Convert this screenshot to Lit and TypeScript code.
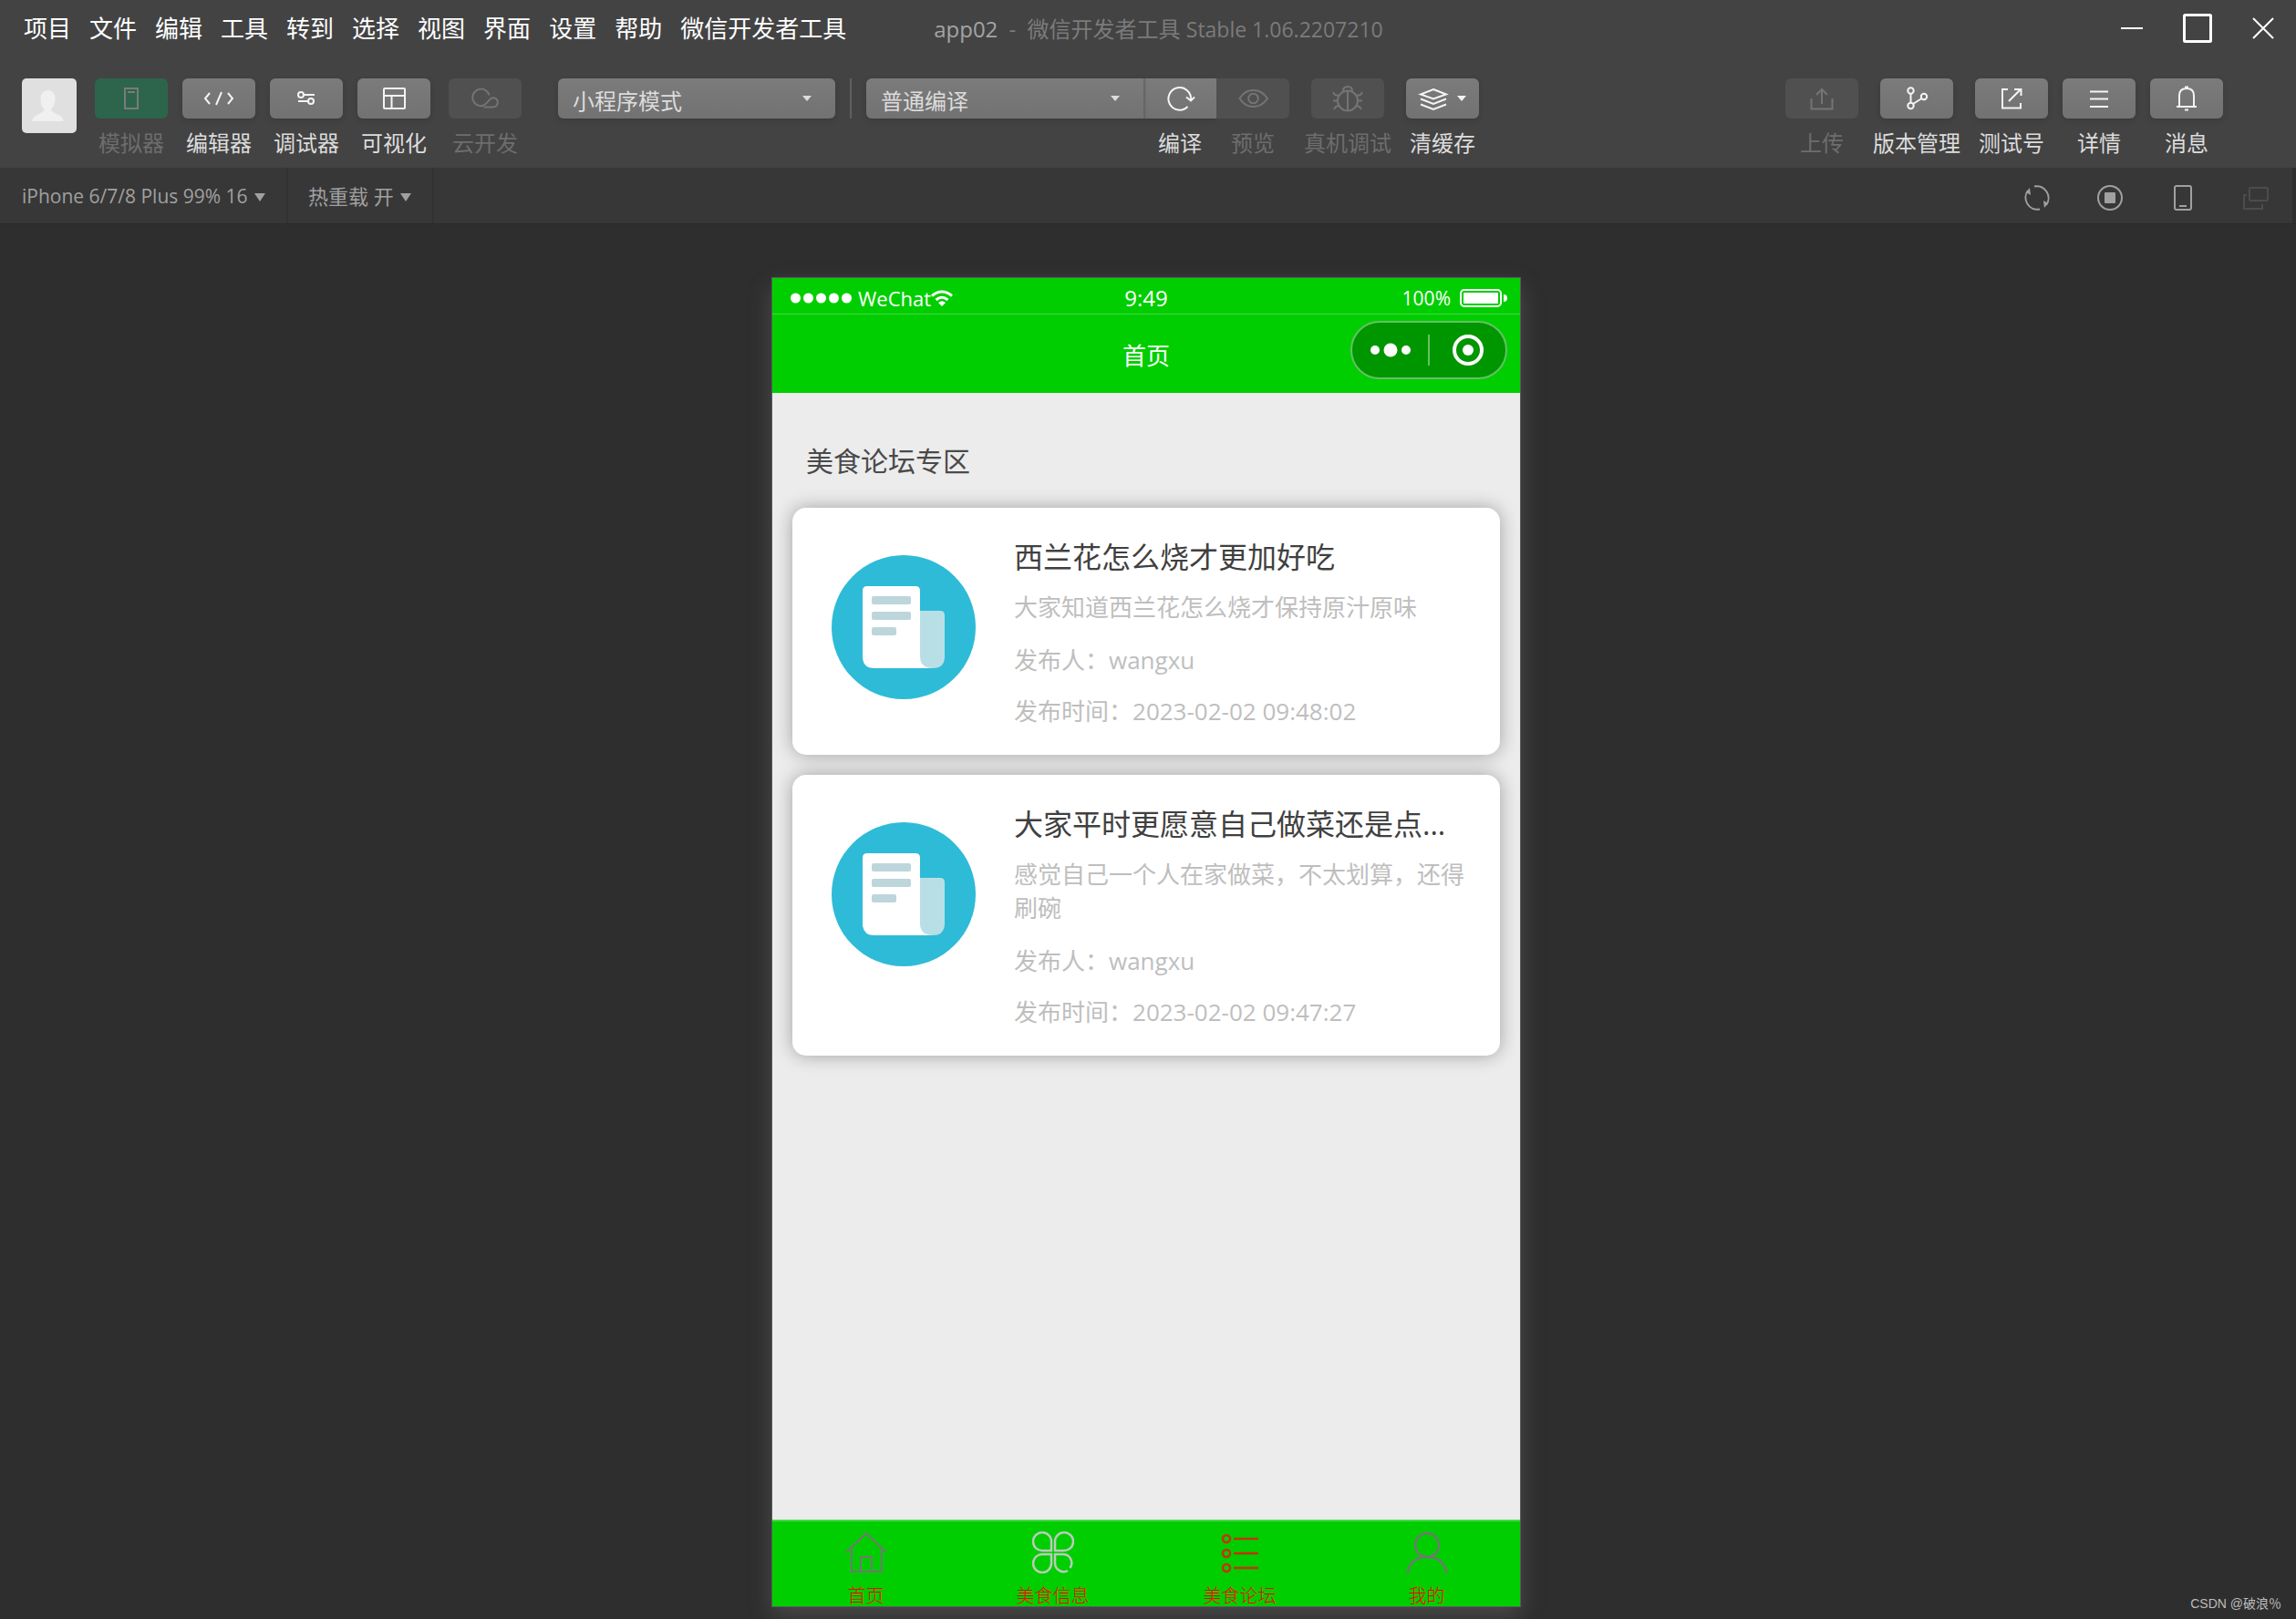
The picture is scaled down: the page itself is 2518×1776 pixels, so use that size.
import { LitElement, html, css, svg, nothing, type TemplateResult } from "lit";
import { customElement } from "lit/decorators.js";
import { classMap } from "lit/directives/class-map.js";

/* Toolbar icons share one 80x44 canvas, the size of a toolbar button. */
const icons = {
  simulator: svg`<path d="M33 11h14v22H33zM36 15h8"/>`,
  code: svg`<path d="M30 16l-5 6 5 6M43 15l-6 14M50 16l5 6-5 6"/>`,
  debug: svg`<circle cx="34" cy="18" r="3"/><path d="M37 18h12M31 25h11"/><circle cx="45" cy="25" r="3"/>`,
  layout: svg`<rect x="29" y="11" width="23" height="22" rx="1"/><path d="M29 19h23M37.500 19v14"/>`,
  cloud: svg`<path d="M44.500 18.500A9.300 9.300 0 1 0 35 30.200c4 0 6-2.500 8.500-5.200 2-2.500 4-4 6.500-3.600 5.500 1.200 5 10-1.500 10h-10"/>`,
  compile: svg`<path d="M46.500 31A12.300 12.300 0 1 1 50 23.500M45 20.500l5 4 4-4"/>`,
  preview: svg`<path d="M25.500 22Q31 13 40.500 13T56 22Q50 31 40.500 31T25.500 22z"/><circle cx="40.500" cy="22" r="5.300"/>`,
  bug: svg`<ellipse cx="40" cy="24.500" rx="11" ry="11"/><path d="M40 14v21M35 14q0-5 5-5t5 5M30 19l-4-1-2-3M50 19l4-1 2-3M29 24.500h-5M51 24.500h5M31 30l-4 1-2 3M49 30l4 1 2 3"/>`,
  layers: svg`<path d="M30 12l14 5.500-14 5-14-5zM16 22.500l14 5.500 14-5.500M16 28.500l14 5.500 14-5.500"/><path class="fill" d="M56 19h10l-5 6z"/>`,
  upload: svg`<path d="M40 12v16M34 18l6-6 6 6M28.500 22v11.500h23V22"/>`,
  branch: svg`<circle cx="33.500" cy="13.500" r="3.200"/><circle cx="48" cy="20" r="3.200"/><circle cx="33.500" cy="30" r="3.200"/><path d="M33.500 17v10M36 28l9.500-6"/>`,
  external: svg`<path d="M36 12h-6v20.500h20V27M37 25l13-13M43 12h7.500v7"/>`,
  list: svg`<path d="M30 14.500h20M30 22.500h20M30 31h20"/>`,
  bell: svg`<path d="M29 31h22M32 31V19q0-8 8-8t8 8v12M38 9.500h4M38 34.500h4"/>`,
};

const icon = (name: keyof typeof icons) => html`
  <svg class="icon" viewBox="0 0 80 44" aria-hidden="true">${icons[name]}</svg>
`;

interface Tool {
  label: string;
  icon: keyof typeof icons;
  disabled?: boolean;
  active?: boolean;
}

interface Post {
  title: string;
  text: string;
  author: string;
  time: string;
}

const menus = ["项目", "文件", "编辑", "工具", "转到", "选择", "视图", "界面", "设置", "帮助", "微信开发者工具"];

const panels: Tool[] = [
  { label: "模拟器", icon: "simulator", active: true, disabled: true },
  { label: "编辑器", icon: "code" },
  { label: "调试器", icon: "debug" },
  { label: "可视化", icon: "layout" },
];

const actions: Tool[] = [
  { label: "上传", icon: "upload", disabled: true },
  { label: "版本管理", icon: "branch" },
  { label: "测试号", icon: "external" },
  { label: "详情", icon: "list" },
  { label: "消息", icon: "bell" },
];

const posts: Post[] = [
  {
    title: "西兰花怎么烧才更加好吃",
    text: "大家知道西兰花怎么烧才保持原汁原味",
    author: "wangxu",
    time: "2023-02-02 09:48:02",
  },
  {
    title: "大家平时更愿意自己做菜还是点...",
    text: "感觉自己一个人在家做菜，不太划算，还得刷碗",
    author: "wangxu",
    time: "2023-02-02 09:47:27",
  },
];

const fontStack = css`"Open Sans", "Noto Sans CJK SC", sans-serif`;

const base = css`
  * {
    box-sizing: border-box;
    margin: 0;
  }
  button,
  select {
    padding: 0;
    border: 0;
    background: none;
    color: inherit;
    font: inherit;
    appearance: none;
  }
  a {
    color: inherit;
    text-decoration: none;
  }
  svg {
    display: block;
    flex: none;
    fill: none;
    stroke: currentColor;
  }
  .fill {
    fill: currentColor;
    stroke: none;
  }
`;

@customElement("phone-simulator")
export class PhoneSimulator extends LitElement {
  static styles = [
    base,
    css`
      :host {
        display: flex;
        flex-direction: column;
        background: #ececec;
        font-family: ${fontStack};
        box-shadow: 0 0 0 1px #5a5a5a, 0 10px 24px rgba(130, 130, 130, 0.36);
      }
      .status {
        display: grid;
        grid-template-columns: 1fr auto 1fr;
        align-items: center;
        height: 40px;
        padding: 4px 14px 0;
        border-bottom: 1px solid #45d945;
        background: #00ce00;
        color: #fff;
        font-size: 24px;
        line-height: 30px;
      }
      .carrier,
      .power {
        display: flex;
        align-items: center;
      }
      .carrier {
        gap: 7px;
        padding-left: 6px;
        font-size: 22px;
      }
      .network {
        display: flex;
        align-items: center;
      }
      .power {
        justify-content: flex-end;
        gap: 10px;
        font-size: 21px;
      }
      .header {
        position: relative;
        display: flex;
        align-items: center;
        justify-content: center;
        height: 86px;
        padding-top: 4px;
        background: #00ce00;
        color: #fff;
      }
      .header-title {
        font-size: 26px;
        font-weight: 400;
        line-height: 36px;
      }
      .capsule {
        position: absolute;
        top: 7px;
        right: 14px;
        display: flex;
        align-items: center;
        width: 172px;
        height: 64px;
        border: 2px solid #66c066;
        border-radius: 32px;
        background: #009600;
      }
      .capsule-button {
        display: flex;
        flex: 1;
        align-items: center;
        justify-content: center;
        height: 100%;
      }
      .capsule-line {
        width: 2px;
        height: 34px;
        background: #66c066;
      }
      .page {
        flex: 1;
        padding: 51px 22px 22px;
      }
      .page-title {
        margin: 0 0 27px;
        padding-left: 15px;
        color: #4a4a4a;
        font-size: 30px;
        font-weight: 400;
        line-height: 48px;
      }
      .posts {
        display: grid;
        grid-template-columns: minmax(0, 1fr);
        gap: 22px;
      }
      .card {
        display: flex;
        gap: 42px;
        padding: 30px 37px 28px 43px;
        border-radius: 15px;
        background: #fff;
        box-shadow: 0 0 20px rgba(0, 0, 0, 0.32);
      }
      .card-icon {
        margin-top: 22px;
      }
      .card-body {
        flex: 1;
        min-width: 0;
        color: #bebebe;
        font-size: 26px;
        line-height: 40px;
      }
      .card-title {
        color: #404040;
        font-size: 32px;
        font-weight: 400;
        line-height: 48px;
      }
      .card-text {
        margin: 13px 0 19px;
        line-height: 37px;
      }
      .card-time {
        margin-top: 16px;
      }
      .tabs {
        display: grid;
        grid-template-columns: repeat(4, 1fr);
        height: 95px;
        border-top: 2px solid #45d945;
        background: #00ce00;
      }
      .tab {
        display: flex;
        flex-direction: column;
        align-items: center;
        gap: 11px;
        padding-top: 11px;
        color: #f00;
        font-size: 20px;
        font-weight: 300;
        line-height: 28px;
      }
      .gray {
        color: #727772;
      }
      .silver {
        color: #bccabc;
      }
      .brown {
        color: #c4330a;
      }
    `,
  ];

  private renderPost(post: Post) {
    return html`
      <article class="card">
        <svg class="card-icon" width="158" height="158" viewBox="0 0 158 158" aria-hidden="true" stroke="none">
          <circle cx="79" cy="79" r="79" fill="#2ebbd7" stroke="none" />
          <path stroke="none" fill="#fff" d="M39 34h53q5 0 5 5v85H47q-13 0-13-13V39q0-5 5-5zM90 100h20v24H90z" />
          <path stroke="none" fill="#b9dfe6" d="M97 61h22q5 0 5 5v45q0 13-13 13-14 0-14-13z" />
          <g fill="#bcd6dc" stroke="none">
            <rect x="44" y="45" width="43" height="9" rx="2" />
            <rect x="44" y="62" width="43" height="9" rx="2" />
            <rect x="44" y="79" width="27" height="9" rx="2" />
          </g>
        </svg>
        <div class="card-body">
          <h3 class="card-title">${post.title}</h3>
          <p class="card-text">${post.text}</p>
          <p>发布人：${post.author}</p>
          <p class="card-time">发布时间：<time>${post.time}</time></p>
        </div>
      </article>
    `;
  }

  private renderTab(label: string, tone: string, shape: TemplateResult<2>) {
    return html`
      <a class="tab" href="#">
        <svg class=${tone} width="46" height="46" viewBox="0 0 46 46" stroke-width="2" aria-hidden="true">${shape}</svg>
        ${label}
      </a>
    `;
  }

  render() {
    return html`
      <div class="status">
        <div class="carrier">
          <svg width="67" height="12" viewBox="0 0 67 12" aria-hidden="true">
            ${[0, 1, 2, 3, 4].map((i) => svg`<circle class="fill" cx=${5.5 + i * 14} cy="6" r="5.500"/>`)}
          </svg>
          <span class="network">
            WeChat
            <svg width="24" height="18" viewBox="0 0 24 18" stroke-width="3" aria-hidden="true">
              <path d="M1 6.500Q12-2.500 23 6.500M5.500 11Q12 5.500 18.500 11" />
              <path class="fill" d="M8 14q4-3.500 8 0l-4 4z" />
            </svg>
          </span>
        </div>
        <span>9:49</span>
        <div class="power">
          100%
          <svg width="52" height="20" viewBox="0 0 52 20" stroke-width="2" aria-hidden="true">
            <rect x="1" y="1" width="44" height="18" rx="4" />
            <rect class="fill" x="4" y="4" width="38" height="12" rx="1" />
            <path class="fill" d="M48 6q4 0 4 4t-4 4z" />
          </svg>
        </div>
      </div>
      <header class="header">
        <h1 class="header-title">首页</h1>
        <div class="capsule">
          <button class="capsule-button" aria-label="更多">
            <svg width="44" height="16" viewBox="0 0 44 16">
              <circle class="fill" cx="5" cy="8" r="5" />
              <circle class="fill" cx="22" cy="8" r="7.500" />
              <circle class="fill" cx="39" cy="8" r="5" />
            </svg>
          </button>
          <span class="capsule-line"></span>
          <button class="capsule-button" aria-label="关闭">
            <svg width="34" height="34" viewBox="0 0 34 34" stroke-width="4">
              <circle cx="17" cy="17" r="15" />
              <circle class="fill" cx="17" cy="17" r="6" />
            </svg>
          </button>
        </div>
      </header>
      <main class="page">
        <h2 class="page-title">美食论坛专区</h2>
        <div class="posts">${posts.map((p) => this.renderPost(p))}</div>
      </main>
      <nav class="tabs">
        ${this.renderTab("首页", "gray", svg`<path d="M1 23L23 2l22 21M7 17v27h33V17M17 44V28h12v16"/>`)}
        ${this.renderTab("美食信息", "silver", svg`
          <path stroke-width="2.500" d="M21 21H11.500a10 10 0 1 1 9.500-10zM25 21h9.500a10 10 0 1 0-9.500-10zM21 25H11.500a10 10 0 1 0 9.500 10zM41.500 40a9.500 9.500 0 0 0-7-15H25v10a9.500 9.500 0 0 0 14 8"/>`)}
        ${this.renderTab("美食论坛", "brown", svg`
          <g stroke-width="2.500"><circle cx="8" cy="8" r="4"/><circle cx="8" cy="24" r="4"/><circle cx="8" cy="40" r="4"/><path d="M16 8h27M16 24h27M16 40h27"/></g>`)}
        ${this.renderTab("我的", "gray", svg`<g stroke-width="2.500"><circle cx="23" cy="15" r="13"/><path d="M1.500 46q3-18 21.500-18t21.500 18"/></g>`)}
      </nav>
    `;
  }
}

@customElement("app-root")
export class AppRoot extends LitElement {
  static styles = [
    base,
    css`
      :host {
        position: relative;
        display: flex;
        flex-direction: column;
        min-height: 100vh;
        background: #2e2e2e;
        color: #dcdcdc;
        font-family: ${fontStack};
      }
      .titlebar {
        display: flex;
        align-items: center;
        height: 62px;
        padding-left: 26px;
        background: #434343;
      }
      .menus {
        display: flex;
        gap: 20px;
        color: #fff;
        font-size: 26px;
        line-height: 36px;
        white-space: nowrap;
      }
      .window-title {
        flex: 1;
        margin-left: 96px;
        padding-top: 2px;
        color: #7b7b7b;
        font-size: 24px;
        line-height: 36px;
        white-space: nowrap;
      }
      .project {
        margin-right: 6px;
        color: #a3a3a3;
      }
      .dash {
        margin-right: 6px;
      }
      .version {
        font-size: 23px;
      }
      .window-controls {
        display: flex;
        color: #fff;
      }
      .window-button {
        display: grid;
        place-items: center;
        width: 72px;
        height: 60px;
      }
      .toolbar {
        display: flex;
        align-items: flex-start;
        padding: 24px 80px 12px 24px;
        background: #434343;
        font-size: 24px;
      }
      .avatar {
        width: 60px;
        height: 60px;
        margin-right: 20px;
        border-radius: 5px;
        background: #e0e0e0;
        color: #f0f0f0;
      }
      .group {
        display: flex;
        gap: 16px;
      }
      .tool {
        display: flex;
        flex-direction: column;
        align-items: center;
        gap: 12px;
        min-width: 80px;
        line-height: 30px;
        white-space: nowrap;
      }
      .face,
      .mode {
        height: 44px;
        border-radius: 6px;
        background: linear-gradient(#7b7b7b, #727272);
        box-shadow: 0 2px 6px rgba(0, 0, 0, 0.14);
      }
      .face {
        width: 80px;
        color: #f4f4f4;
      }
      .icon {
        width: 80px;
        height: 44px;
        stroke-width: 2;
      }
      .disabled {
        color: #6d6d6d;
      }
      .disabled .face {
        background: #505050;
        box-shadow: none;
        color: #747474;
      }
      .active .face {
        background: #2d654c;
        color: #7a7a7a;
      }
      .joined {
        display: flex;
        align-items: flex-start;
      }
      .joined .face {
        border-radius: 0;
      }
      .joined .mode {
        border-radius: 6px 0 0 6px;
      }
      .joined .tool:nth-child(2) .face {
        border-left: 2px solid #6b6b6b;
      }
      .joined .tool:last-child .face {
        border-radius: 0 6px 6px 0;
      }
      .cloud {
        margin: 0 40px 0 20px;
      }
      .picker {
        position: relative;
        display: flex;
        align-items: center;
      }
      .picker::after {
        content: "";
        position: absolute;
        right: 26px;
        width: 10px;
        height: 6px;
        background: currentColor;
        clip-path: polygon(0 0, 100% 0, 50% 100%);
        pointer-events: none;
      }
      .mode {
        width: 304px;
        padding: 6px 16px 0;
        line-height: 38px;
      }
      .separator {
        width: 2px;
        height: 44px;
        margin: 0 16px;
        background: #606060;
      }
      .right {
        margin-left: auto;
      }
      .subbar {
        display: flex;
        align-items: center;
        height: 61px;
        margin-right: 4px;
        padding-right: 25px;
        background: #373737;
        color: #a0a0a0;
        font-size: 22px;
      }
      .option {
        height: 100%;
        border-right: 2px solid #323232;
      }
      .option::after {
        right: 23px;
        width: 12px;
        height: 9px;
        margin-top: 4px;
      }
      .option-select {
        padding: 0 42px 0 22px;
        line-height: 32px;
      }
      .device {
        padding-left: 24px;
        font-size: 21px;
      }
      .sub-icons {
        display: flex;
        gap: 50px;
        margin-left: auto;
        padding-top: 4px;
      }
      .dim {
        color: #4c4c4c;
      }
      .stage {
        display: flex;
        flex: 1;
        justify-content: center;
        padding: 59px 0 14px;
        border-top: 1px solid #292929;
      }
      .phone {
        width: 820px;
        margin-right: 4px;
      }
      .watermark {
        position: absolute;
        right: 16px;
        bottom: 6px;
        color: #bdbdbd;
        font-family: "Liberation Sans", "Noto Sans CJK SC", sans-serif;
        font-size: 14px;
        line-height: 22px;
      }
    `,
  ];

  private renderTool(tool: Tool) {
    const state = classMap({ tool: true, disabled: !!tool.disabled, active: !!tool.active });
    return html`
      <button class=${state} ?disabled=${tool.disabled ?? false}>
        <span class="face">${icon(tool.icon)}</span>
        ${tool.label ? html`<span>${tool.label}</span>` : nothing}
      </button>
    `;
  }

  private renderPicker(label: string, value: string, wrap: string, control: string) {
    return html`
      <span class="picker ${wrap}">
        <select class=${control} aria-label=${label}><option>${value}</option></select>
      </span>
    `;
  }

  render() {
    return html`
      <header class="titlebar">
        <nav class="menus">${menus.map((m) => html`<button>${m}</button>`)}</nav>
        <div class="window-title">
          <span class="project">app02</span>
          <span class="dash">-</span>
          微信开发者工具 <span class="version">Stable 1.06.2207210</span>
        </div>
        <div class="window-controls">
          <button class="window-button" aria-label="最小化">
            <svg width="24" height="32" viewBox="0 0 24 32" stroke-width="2"><path d="M0 16h24" /></svg>
          </button>
          <button class="window-button" aria-label="最大化">
            <svg width="32" height="32" viewBox="0 0 32 32" stroke-width="3">
              <rect x="1.500" y="1.500" width="29" height="29" rx="1" />
            </svg>
          </button>
          <button class="window-button" aria-label="关闭">
            <svg width="24" height="24" viewBox="0 0 24 24" stroke-width="2"><path d="M1 1l22 22M23 1L1 23" /></svg>
          </button>
        </div>
      </header>

      <div class="toolbar">
        <button class="avatar" aria-label="用户">
          <svg width="60" height="60" viewBox="0 0 60 60">
            <path class="fill" d="M28.500 13c5 0 8 4 8 9 0 6-2 9-4.500 12 0 5 14 5 13.500 13H11.500c0-8 13-8 13-13-2.500-3-4-6-4-12 0-5 3-9 8-9z" />
          </svg>
        </button>
        <div class="group">${panels.map((t) => this.renderTool(t))}</div>
        <div class="cloud">${this.renderTool({ label: "云开发", icon: "cloud", disabled: true })}</div>
        ${this.renderPicker("模式", "小程序模式", "", "mode")}
        <span class="separator"></span>
        <div class="group">
          <div class="joined">
            ${this.renderPicker("编译模式", "普通编译", "", "mode")}
            ${this.renderTool({ label: "编译", icon: "compile" })}
            ${this.renderTool({ label: "预览", icon: "preview", disabled: true })}
          </div>
          ${this.renderTool({ label: "真机调试", icon: "bug", disabled: true })}
          ${this.renderTool({ label: "清缓存", icon: "layers" })}
        </div>
        <div class="group right">${actions.map((t) => this.renderTool(t))}</div>
      </div>

      <div class="subbar">
        ${this.renderPicker("设备", "iPhone 6/7/8 Plus 99% 16", "option", "option-select device")}
        ${this.renderPicker("热重载", "热重载 开", "option", "option-select")}
        <div class="sub-icons">
          <button aria-label="刷新">
            <svg width="30" height="30" viewBox="0 0 30 30" stroke-width="2">
              <path d="M12 2.500A13 13 0 0 1 25 23M18 27.500A13 13 0 0 1 5 7" />
              <path class="fill" d="M3 9l4-5 1 8zM27 21l-4 5-1-8z" />
            </svg>
          </button>
          <button aria-label="停止">
            <svg width="30" height="30" viewBox="0 0 30 30" stroke-width="2">
              <circle cx="15" cy="15" r="13" />
              <rect class="fill" x="9" y="9" width="12" height="12" rx="1" />
            </svg>
          </button>
          <button aria-label="机型">
            <svg width="30" height="30" viewBox="0 0 30 30" stroke-width="2">
              <rect x="6" y="2" width="18" height="26" rx="2" />
              <path d="M11 24h8" />
            </svg>
          </button>
          <button class="dim" aria-label="分离窗口">
            <svg width="30" height="30" viewBox="0 0 30 30" stroke-width="2">
              <rect x="8" y="4" width="20" height="14" rx="1" />
              <path d="M5 12H2v15h20v-5" />
            </svg>
          </button>
        </div>
      </div>

      <div class="stage"><phone-simulator class="phone"></phone-simulator></div>
      <span class="watermark">CSDN @破浪％</span>
    `;
  }
}
